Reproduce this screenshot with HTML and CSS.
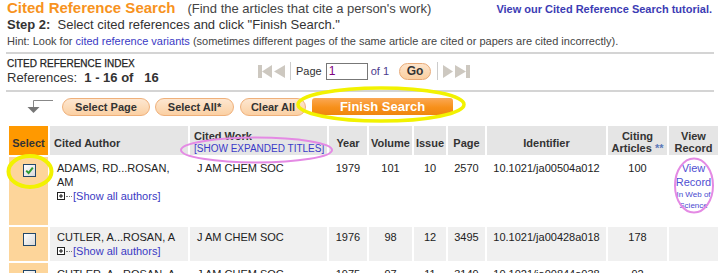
FILE: index.html
```html
<!DOCTYPE html>
<html>
<head>
<meta charset="utf-8">
<link rel="stylesheet" href="styles.css">
</head>
<body>
<div class="page">
  <div class="title-row">
    <h1 class="title">Cited Reference Search</h1>
    <span class="subtitle">(Find the articles that cite a person's work)</span>
    <a class="tutorial">View our Cited Reference Search tutorial.</a>
  </div>
  <div class="step"><b>Step 2:</b>&nbsp; Select cited references and click "Finish Search."</div>
  <div class="hint">Hint: Look for <a class="link">cited reference variants</a> (sometimes different pages of the same article are cited or papers are cited incorrectly).</div>
  <div class="rule"></div>
  <div class="index-row">
    <div class="index-info">
      <div class="index-label">CITED REFERENCE INDEX</div>
      <div class="refs">References:&nbsp; <b>1 - 16 of &nbsp; 16</b></div>
    </div>
    <div class="pager">
      <svg class="pg-icon" width="28" height="13" viewBox="0 0 28 13"><rect x="0" y="0" width="4" height="13" fill="#cdc8c0"/><polygon points="4,6.5 14,0 14,13" fill="#cdc8c0"/><polygon points="16,6.5 27,0 27,13" fill="#cdc8c0"/></svg>
      <span class="pg-sep"></span>
      <span class="pg-label">Page</span>
      <span class="pg-input">1</span>
      <span class="pg-of">of 1</span>
      <span class="btn go">Go</span>
      <span class="pg-sep"></span>
      <svg class="pg-icon" width="27" height="13" viewBox="0 0 27 13"><polygon points="0,0 10,6.5 0,13" fill="#cdc8c0"/><polygon points="12,0 23,6.5 12,13" fill="#cdc8c0"/><rect x="23" y="0" width="4" height="13" fill="#cdc8c0"/></svg>
    </div>
  </div>
  <div class="rule rule2"></div>
  <div class="actions">
    <svg class="arrow" width="26" height="14" viewBox="0 0 26 14"><path d="M26 0.5 H6.5 V7" stroke="#888" stroke-width="1" fill="none"/><polygon points="0.5,7 12.5,7 6.5,13" fill="#777"/></svg>
    <span class="btn pill w-page">Select Page</span>
    <span class="btn pill w-all">Select All*</span>
    <span class="btn pill w-clear">Clear All</span>
    <span class="btn finish">Finish Search</span>
  </div>
</div>

<table class="results">
  <colgroup>
    <col class="c-sel"><col class="c-author"><col class="c-work"><col class="c-year"><col class="c-vol"><col class="c-issue"><col class="c-page"><col class="c-id"><col class="c-cit"><col class="c-view">
  </colgroup>
  <thead>
    <tr>
      <th class="sel">Select</th>
      <th class="left">Cited Author</th>
      <th class="left two">Cited Work<br><a class="expand">[SHOW EXPANDED TITLES]</a></th>
      <th>Year</th>
      <th>Volume</th>
      <th>Issue</th>
      <th>Page</th>
      <th>Identifier</th>
      <th class="two">Citing<br>Articles <span class="stars">**</span></th>
      <th class="two">View<br>Record</th>
    </tr>
  </thead>
  <tbody>
    <tr class="row r1">
      <td class="sel"><span class="cb"><svg width="9" height="9" viewBox="0 0 9 9"><path d="M1.2 4.6 L3.6 7 L7.8 1.6" stroke="#2e9a32" stroke-width="2" fill="none"/></svg></span></td>
      <td class="left">ADAMS, RD...ROSAN,<br>AM<br><span class="more"><svg class="plus" width="8" height="8" viewBox="0 0 8 8"><rect x="0.5" y="0.5" width="7" height="7" fill="#fff" stroke="#222"/><path d="M2 4 H6 M4 2 V6" stroke="#111"/></svg><span class="dots"></span><a class="link">[Show all authors]</a></span></td>
      <td class="left">J AM CHEM SOC</td>
      <td>1979</td>
      <td>101</td>
      <td>10</td>
      <td>2570</td>
      <td>10.1021/ja00504a012</td>
      <td>100</td>
      <td class="view"><a class="vr">View<br>Record</a><span class="wos">In Web of<br>Science</span></td>
    </tr>
    <tr class="row r2">
      <td class="sel"><span class="cb"></span></td>
      <td class="left">CUTLER, A...ROSAN, A<br><span class="more"><svg class="plus" width="8" height="8" viewBox="0 0 8 8"><rect x="0.5" y="0.5" width="7" height="7" fill="#fff" stroke="#222"/><path d="M2 4 H6 M4 2 V6" stroke="#111"/></svg><span class="dots"></span><a class="link">[Show all authors]</a></span></td>
      <td class="left">J AM CHEM SOC</td>
      <td>1976</td>
      <td>98</td>
      <td>12</td>
      <td>3495</td>
      <td>10.1021/ja00428a018</td>
      <td>178</td>
      <td></td>
    </tr>
    <tr class="row r3">
      <td class="sel"><span class="cb"></span></td>
      <td class="left">CUTLER, A...ROSAN, A</td>
      <td class="left">J AM CHEM SOC</td>
      <td>1975</td>
      <td>97</td>
      <td>11</td>
      <td>3149</td>
      <td>10.1021/ja00844a038</td>
      <td>92</td>
      <td></td>
    </tr>
  </tbody>
</table>

<svg class="marks" width="724" height="273" viewBox="0 0 724 273">
  <ellipse cx="381" cy="104.5" rx="83" ry="16.5" fill="none" stroke="#f2f200" stroke-width="3.5"/>
  <ellipse cx="30" cy="171.5" rx="21.5" ry="15.5" fill="none" stroke="#f2f200" stroke-width="4"/>
  <ellipse cx="256.5" cy="150" rx="75.5" ry="12.5" fill="none" stroke="#e48ae4" stroke-width="2"/>
  <ellipse cx="694" cy="185.5" rx="19" ry="27" fill="none" stroke="#e48ae4" stroke-width="2"/>
</svg>
</body>
</html>
```

FILE: styles.css
```css
* { box-sizing: border-box; }

html, body {
  margin: 0;
  padding: 0;
  background: #fff;
}

body {
  position: relative;
  width: 724px;
  height: 273px;
  overflow: hidden;
  font-family: "Liberation Sans", Arial, sans-serif;
  color: #333;
}

.page {
  padding: 0 10px 0 6px;
}

.title-row {
  display: flex;
  align-items: baseline;
  height: 17px;
  margin-top: -1px;
  line-height: 17px;
}

.title {
  margin: 0 0 0 1px;
  font-size: 15px;
  font-weight: bold;
  color: #f7931e;
}

.subtitle {
  margin-left: 12px;
  font-size: 13px;
  color: #444;
}

.tutorial {
  margin-left: auto;
  margin-right: 2px;
  font-size: 11px;
  font-weight: bold;
  color: #3c3cb4;
}

.step {
  margin-top: 1px;
  margin-left: 1px;
  font-size: 13px;
  line-height: 16px;
  color: #333;
}

.hint {
  margin-top: 1px;
  margin-left: 1px;
  font-size: 11px;
  line-height: 14px;
  color: #444;
}

.link {
  color: #3a3ac4;
}

.rule {
  margin-top: 4px;
  height: 2px;
  background: #d4d4d4;
}

.index-row {
  display: flex;
  align-items: flex-start;
  margin-top: 4px;
  height: 27px;
}

.index-info {
  width: 252px;
  padding-left: 1px;
}

.index-label {
  font-size: 10px;
  line-height: 12px;
  color: #222;
  -webkit-text-stroke: 0.25px #222;
}

.refs {
  font-size: 13px;
  line-height: 15px;
  color: #333;
}

.pager {
  display: flex;
  align-items: center;
  margin-top: 4px;
  height: 18px;
  font-size: 11px;
}

.pg-icon {
  display: block;
}

.pg-sep {
  width: 1px;
  height: 18px;
  background: #ccc;
  margin: 0 5px 0 4px;
}

.pg-label {
  color: #333;
  margin-right: 4px;
}

.pg-input {
  width: 42px;
  height: 17px;
  border: 1px solid #777;
  padding-left: 2px;
  line-height: 15px;
  font-size: 12px;
  color: #800080;
  background: #fff;
}

.pg-of {
  margin-left: 3px;
  margin-right: 10px;
  color: #4b3a8c;
}

.btn {
  display: inline-flex;
  align-items: center;
  justify-content: center;
  font-weight: bold;
  font-size: 11px;
  color: #333;
}

.go {
  width: 32px;
  height: 17px;
  border-radius: 9px;
  border: 1px solid #e8aa77;
  background: linear-gradient(#fde4cb, #fbcfa0);
  font-size: 12px;
  margin-right: 2px;
}

.rule2 {
  margin-top: 5px;
}

.actions {
  display: flex;
  align-items: center;
  margin-top: 6px;
  height: 18px;
}

.arrow {
  display: block;
  margin-left: 21px;
  margin-right: 9px;
  margin-top: -1px;
}

.pill {
  height: 18px;
  border-radius: 9px;
  border: 1px solid #efb07a;
  background: linear-gradient(#fde7d1, #fbd0a3);
  margin-right: 6px;
}

.w-page { width: 88px; margin-right: 5px; }
.w-all { width: 79px; }
.w-clear { width: 66px; }

.finish {
  width: 141px;
  height: 17px;
  margin-top: -2px;
  border-radius: 3px;
  background: linear-gradient(#fba855 0%, #f7901a 55%, #f0860f 100%);
  color: #fff;
  font-size: 13px;
}

.results {
  margin: 8px 0 0 7px;
  width: 713px;
  table-layout: fixed;
  border-collapse: separate;
  border-spacing: 2px;
  font-size: 11px;
  color: #222;
}

.c-sel { width: 39px; }
.c-author { width: 138px; }
.c-work { width: 137px; }
.c-year { width: 38px; }
.c-vol { width: 43px; }
.c-issue { width: 32px; }
.c-page { width: 37px; }
.c-id { width: 119px; }
.c-cit { width: 59px; }
.c-view { width: 49px; }

.results th {
  height: 28px;
  padding: 4px 0 0;
  background: #e5e5e5;
  font-weight: bold;
  font-size: 11px;
  line-height: 14px;
  color: #333;
  text-align: center;
  vertical-align: middle;
}

.results th.two {
  line-height: 12px;
  vertical-align: top;
  padding-top: 4px;
}

.results th.sel {
  background: #ff9900;
}

.results th.left {
  text-align: left;
  padding-left: 4px;
}

.expand {
  font-weight: normal;
  font-size: 10px;
  color: #3a3ac8;
}

.stars {
  color: #5a78b8;
}

.results td {
  padding: 3px 0 0;
  vertical-align: top;
  text-align: center;
  line-height: 14px;
}

.results td.left {
  text-align: left;
  padding-left: 7px;
}

.results td.sel {
  background: #fdd59a;
}

.r1 td { height: 68px; padding-top: 4px; }
.r2 td { height: 34px; background: #f0f0f0; }
.r2 td.sel { background: #fdd59a; }
.r3 td { padding-top: 4px; }

.cb {
  display: block;
  width: 13px;
  height: 13px;
  margin: 3px 0 0 14px;
  border: 1px solid #23486a;
  background: linear-gradient(135deg, #ffffff, #d8d8d8);
}

.cb svg {
  display: block;
  margin: 1px 0 0 1px;
}

.more {
  display: inline-flex;
  align-items: center;
}

.plus {
  display: block;
}

.dots {
  width: 6px;
  height: 1px;
  margin: 1px 1px 0 1px;
  border-top: 1px dotted #777;
}

.view {
  line-height: 14px;
}

.vr {
  display: block;
  color: #5050d2;
  font-size: 11px;
}

.wos {
  display: block;
  font-size: 8px;
  line-height: 11px;
  color: #4a4ad0;
}

.marks {
  position: absolute;
  left: 0;
  top: 0;
  pointer-events: none;
}
```
